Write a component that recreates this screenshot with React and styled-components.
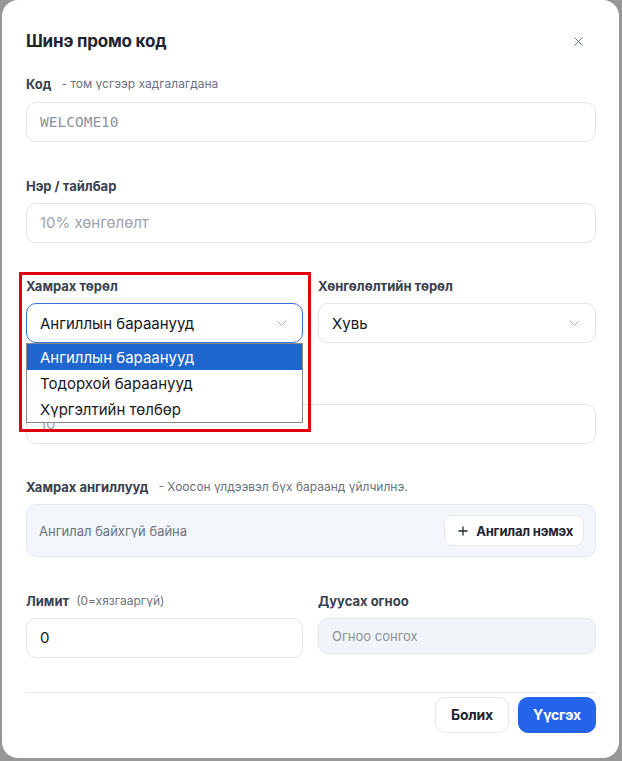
import React from "react";
import styled, { createGlobalStyle } from "styled-components";
import { X, ChevronDown, Plus } from "lucide-react";

const Global = createGlobalStyle`
  html, body { margin: 0; padding: 0; }
  body {
    background: #979797;
    font-family: Inter, "Noto Sans", sans-serif;
    -webkit-font-smoothing: antialiased;
  }
  * { box-sizing: border-box; }
`;

const Modal = styled.div`
  position: relative;
  width: 617px;
  height: 758px;
  margin-left: 2px;
  background: #fff;
  border-radius: 16px;
  padding: 29px 23px 0 24px;
  display: flex;
  flex-direction: column;
`;

const Header = styled.div`
  display: flex;
  align-items: center;
  justify-content: space-between;
  height: 24px;
  margin-bottom: 22px;
`;

const Title = styled.h2`
  margin: 0;
  font-size: 17px;
  font-weight: 700;
  color: #1f2430;
  letter-spacing: -0.2px;
`;

const CloseBtn = styled.button`
  border: 0;
  background: none;
  padding: 0;
  width: 20px;
  height: 20px;
  margin-right: 8px;
  display: flex;
  align-items: center;
  justify-content: center;
  color: #6b7280;
`;

const Form = styled.div`
  display: flex;
  flex-direction: column;
  gap: 34.5px;
`;

const Row = styled.div`
  position: relative;
  display: grid;
  grid-template-columns: 277px 278px;
  column-gap: 15px;
`;

const Field = styled.div`
  display: flex;
  flex-direction: column;
  gap: ${(p) => p.$gap || 8}px;
  position: relative;
`;

const Label = styled.div`
  height: 18px;
  line-height: 18px;
  font-size: 13px;
  font-weight: 700;
  color: #374151;
  display: flex;
  align-items: center;
`;

const Hint = styled.span`
  font-size: 12px;
  font-weight: 400;
  color: #6b7280;
  margin-left: ${(p) => p.$gap || 10}px;
`;

const Input = styled.div`
  height: ${(p) => p.$h || 40}px;
  border: 1px solid ${(p) => (p.$focus ? "#3b6fe0" : "#e2e4e9")};
  border-radius: 10px;
  background: ${(p) => (p.$muted ? "#f1f4f9" : "#fff")};
  display: flex;
  align-items: center;
  padding: 0 13px;
  font-size: ${(p) => p.$size || 15}px;
  color: ${(p) => p.$color || "#111827"};
  font-family: ${(p) =>
    p.$mono ? '"DejaVu Sans Mono", "Liberation Mono", monospace' : "inherit"};
  justify-content: space-between;
`;

const Chevron = styled(ChevronDown)`
  color: #9aa1ad;
`;

const CatBox = styled.div`
  height: 53px;
  border: 1px solid #e3e8f0;
  background: #f3f6fb;
  border-radius: 10px;
  display: flex;
  align-items: center;
  justify-content: space-between;
  padding: 0 11px 0 12px;
`;

const Empty = styled.span`
  font-size: 13px;
  color: #6b7280;
`;

const SmallBtn = styled.button`
  height: 31px;
  padding: 0 10px 0 11px;
  display: flex;
  align-items: center;
  gap: 6px;
  background: #fff;
  border: 1px solid #e5e7eb;
  border-radius: 8px;
  font-family: inherit;
  font-size: 13px;
  font-weight: 700;
  color: #1f2430;
  letter-spacing: -0.2px;
`;

const Divider = styled.div`
  height: 1px;
  background: #e7e8ec;
  margin-top: 34px;
`;

const Footer = styled.div`
  display: flex;
  justify-content: flex-end;
  gap: 9px;
  margin-top: 4px;
`;

const Btn = styled.button`
  height: 36px;
  width: ${(p) => (p.$primary ? 78 : 74)}px;
  padding: 0;
  border-radius: 10px;
  border: 1px solid ${(p) => (p.$primary ? "#2563eb" : "#e5e7eb")};
  background: ${(p) => (p.$primary ? "#2563eb" : "#fff")};
  color: ${(p) => (p.$primary ? "#fff" : "#1f2430")};
  font-family: inherit;
  font-size: 14px;
  font-weight: 700;
  letter-spacing: -0.2px;
`;

const Dropdown = styled.ul`
  position: absolute;
  left: 0;
  top: 66px;
  width: 277px;
  margin: 0;
  padding: 0;
  list-style: none;
  background: #fff;
  border: 1px solid #8a8a8a;
  z-index: 5;
`;

const Option = styled.li`
  height: 26px;
  display: flex;
  align-items: center;
  padding-left: 13px;
  font-size: 15px;
  color: ${(p) => (p.$active ? "#fff" : "#1a1a1a")};
  background: ${(p) => (p.$active ? "#1f66cf" : "#fff")};
`;

const Highlight = styled.div`
  position: absolute;
  left: -7px;
  top: -5px;
  width: 292px;
  height: 160px;
  border: 3px solid #e0000a;
  z-index: 6;
  pointer-events: none;
`;

export default function App() {
  return (
    <>
      <Global />
      <Modal>
        <Header>
          <Title>Шинэ промо код</Title>
          <CloseBtn>
            <X size={15} strokeWidth={1.6} />
          </CloseBtn>
        </Header>
        <Form>
          <Field $gap={9}>
            <Label>
              Код<Hint>- том үсгээр хадгалагдана</Hint>
            </Label>
            <Input $mono $size={14.5} $color="#8d939c">
              WELCOME10
            </Input>
          </Field>
          <Field>
            <Label>Нэр / тайлбар</Label>
            <Input $color="#9ca3af">10% хөнгөлөлт</Input>
          </Field>
          <Row>
            <Field>
              <Label>Хамрах төрөл</Label>
              <Input $focus>
                Ангиллын бараанууд
                <Chevron size={15} strokeWidth={1.5} />
              </Input>
              <Dropdown>
                <Option $active>Ангиллын бараанууд</Option>
                <Option>Тодорхой бараанууд</Option>
                <Option>Хүргэлтийн төлбөр</Option>
              </Dropdown>
              <Highlight />
            </Field>
            <Field>
              <Label>Хөнгөлөлтийн төрөл</Label>
              <Input>
                Хувь
                <Chevron size={15} strokeWidth={1.5} />
              </Input>
            </Field>
          </Row>
          <Field>
            <Label>Хэмжээ (%)</Label>
            <Input $color="#9ca3af">10</Input>
          </Field>
          <Field>
            <Label>
              Хамрах ангиллууд
              <Hint>- Хоосон үлдээвэл бүх бараанд үйлчилнэ.</Hint>
            </Label>
            <CatBox>
              <Empty>Ангилал байхгүй байна</Empty>
              <SmallBtn>
                <Plus size={14} strokeWidth={2.2} />
                Ангилал нэмэх
              </SmallBtn>
            </CatBox>
          </Field>
          <Row>
            <Field>
              <Label>
                Лимит<Hint $gap={7}>(0=хязгааргүй)</Hint>
              </Label>
              <Input>0</Input>
            </Field>
            <Field>
              <Label>Дуусах огноо</Label>
              <Input $muted $h={36} $size={13} $color="#8a909a">
                Огноо сонгох
              </Input>
            </Field>
          </Row>
        </Form>
        <Divider />
        <Footer>
          <Btn>Болих</Btn>
          <Btn $primary>Үүсгэх</Btn>
        </Footer>
      </Modal>
    </>
  );
}
